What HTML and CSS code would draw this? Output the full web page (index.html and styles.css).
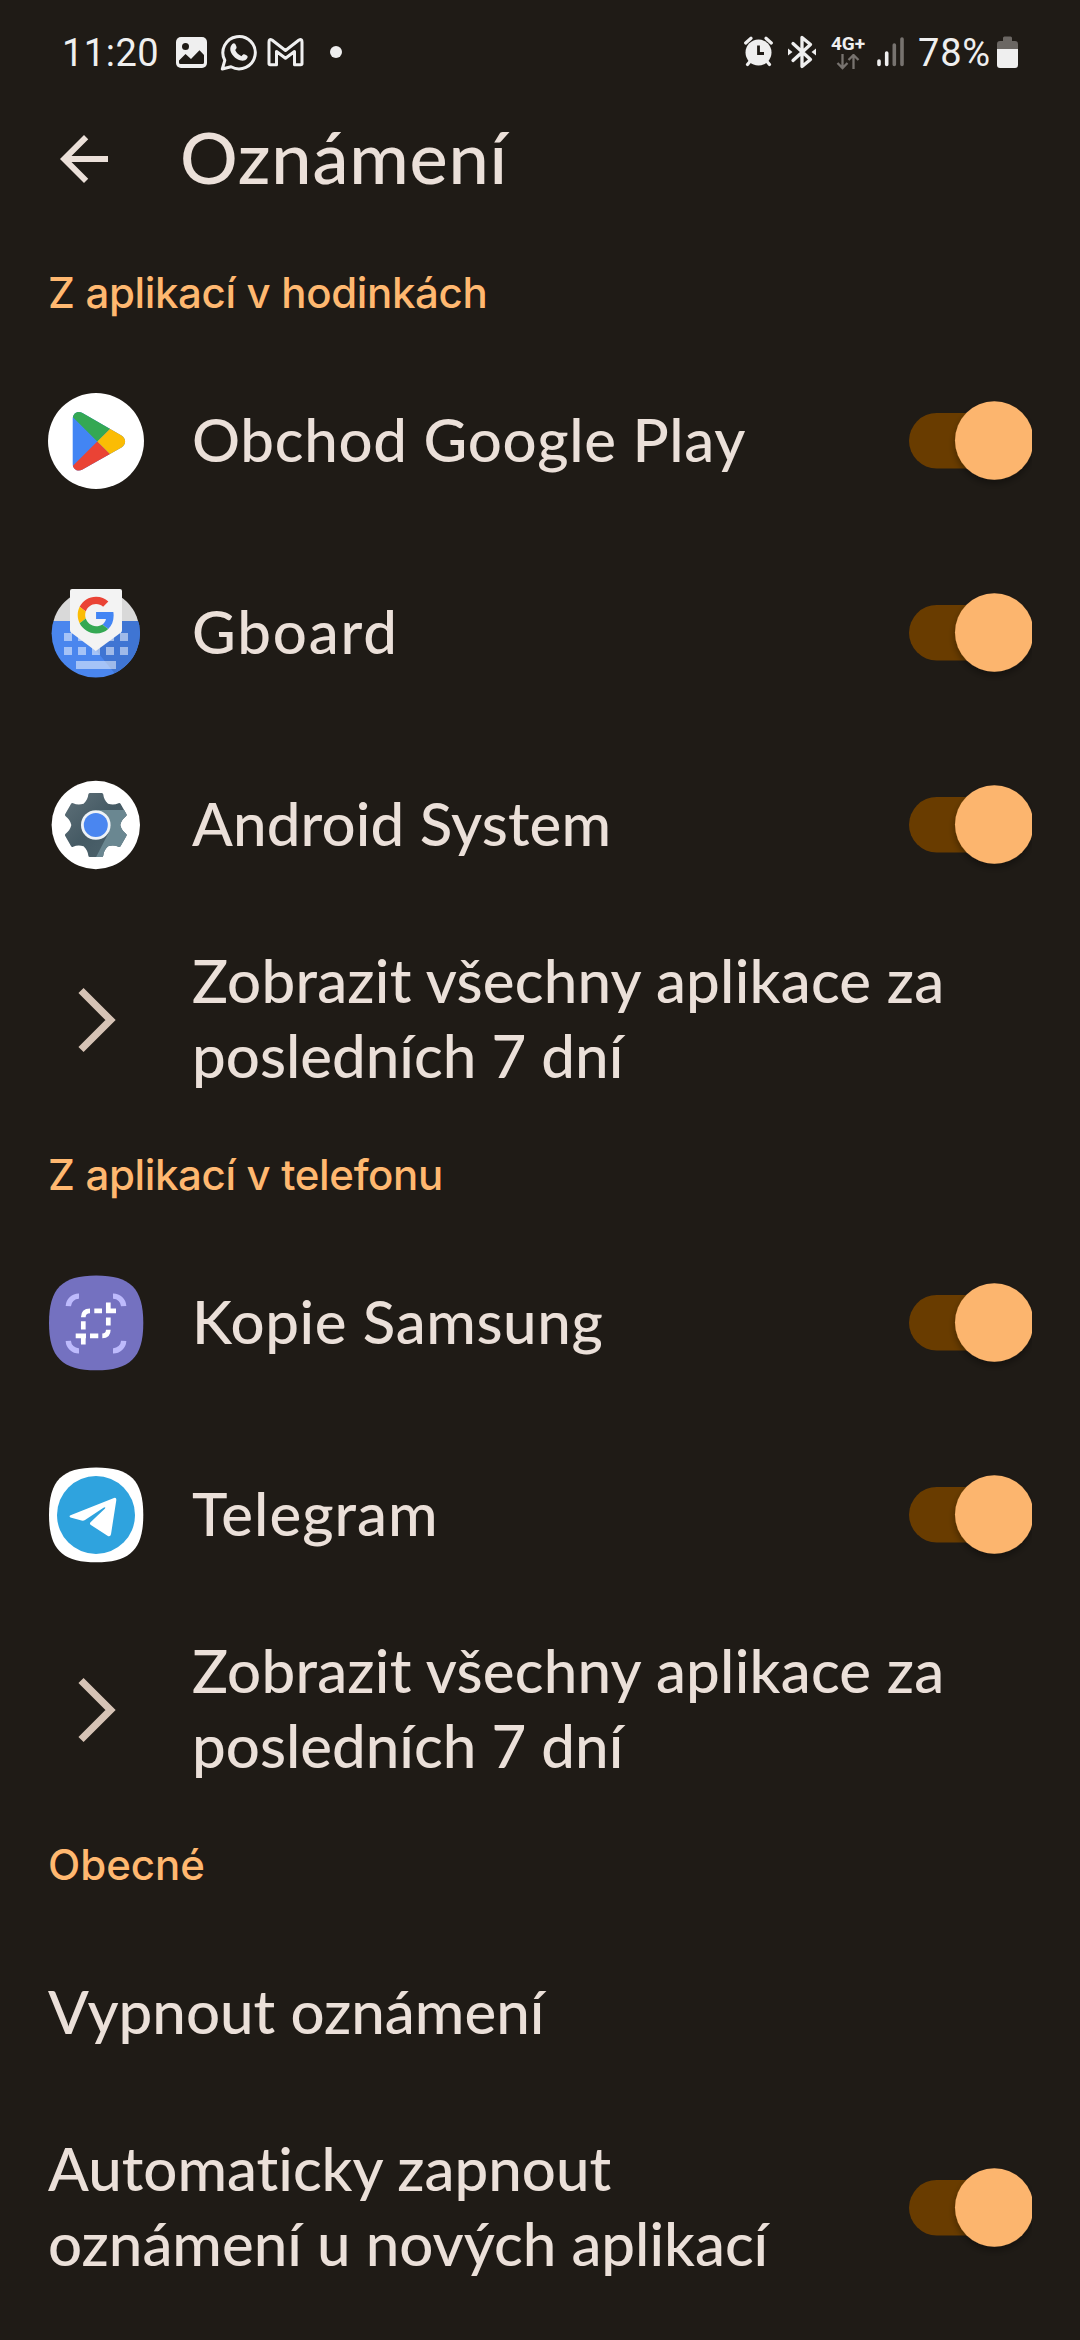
FILE: index.html
```html
<!DOCTYPE html>
<html lang="cs">
<head>
<meta charset="utf-8">
<title>Oznámení</title>
<link rel="stylesheet" href="styles.css">
</head>
<body>
<svg class="defs" width="0" height="0" aria-hidden="true">
  <defs>
    <filter id="thumb-shadow" x="-20%" y="-20%" width="150%" height="150%">
      <feDropShadow dx="0" dy="4" stdDeviation="3.5" flood-color="#000" flood-opacity=".35"/>
    </filter>
    <symbol id="toggle" viewBox="0 0 123 110">
      <rect x="0" y="27" width="115" height="55.500" rx="27.750" fill="#693c00"/>
      <circle cx="85.300" cy="54.500" r="39.300" fill="#fcb56e" filter="url(#thumb-shadow)"/>
    </symbol>
    <symbol id="chevron" viewBox="0 0 96 96">
      <path d="M33 18.500 62.500 48 33 77.500" fill="none" stroke="#d6c3b5" stroke-width="7.300"/>
    </symbol>
  </defs>
</svg>

<div class="status-bar">
  <div class="status-left">
    <span class="clock">11:20</span>
    <svg class="picture" width="31" height="40" viewBox="0 0 31 40">
      <rect y="5" width="31" height="31" rx="5" fill="#efefef"/>
      <circle cx="9.500" cy="14.500" r="3.500" fill="#1f1b16"/>
      <path d="M3 28.500 9.500 22 15 27 23.500 18.300 28 23V30.500Q28 32 26.500 32H4.500Q3 32 3 30.500Z" fill="#1f1b16"/>
    </svg>
    <svg class="whatsapp" width="37" height="40" viewBox="0 0 37 40">
      <path d="M2.300 37 4.800 28.300A16.200 16.200 0 1 1 11 34.700Z" fill="none" stroke="#efefef" stroke-width="3" stroke-linejoin="round"/>
      <path d="M12.300 12C14 10.500 15.200 11.500 16 13.500 16.800 15.500 17 16 15.200 18 16.300 20.800 18.800 23 21.500 24.200 23.300 22 24 22 26 23 28 24 28 24.800 27 26.500 25 29.500 21 29.300 17 27 12 24 7.500 17 12.300 12Z" fill="#efefef"/>
    </svg>
    <svg class="gmail" width="37" height="40" viewBox="0 0 37 40">
      <path d="M2 31.500V10Q2 6.500 5 8L18.500 18.500 32 8Q35 6.500 35 10V31.500Q35 32.700 33.800 32.700H27.500V19.500L18.500 26.300 9.500 19.500V32.700H3.200Q2 32.700 2 31.500Z" fill="none" stroke="#efefef" stroke-width="3" stroke-linejoin="round"/>
    </svg>
    <span class="more-dot"></span>
  </div>
  <div class="status-right">
    <svg width="29" height="40" viewBox="0 0 29 40">
      <g fill="none" stroke="#efefef" stroke-width="3.200" stroke-linecap="round">
        <path d="M1.700 11 7 6.300M27.300 11 22 6.300M6 29.500 3.500 32.500M23 29.500 25.500 32.500"/>
      </g>
      <circle cx="14.500" cy="20.500" r="13" fill="#efefef"/>
      <path d="M14.500 13.500V21.500H20" fill="none" stroke="#1f1b16" stroke-width="2.800"/>
    </svg>
    <svg class="bluetooth" width="28" height="40" viewBox="0 0 28 40">
      <path d="M5 11.500 22.500 27.500 14 34.500V5.500L22.500 12.500 5 28.500" fill="none" stroke="#efefef" stroke-width="3.300" stroke-linejoin="round" stroke-linecap="round"/>
      <path d="M0 16.500 4.500 20 0 23.500ZM28 16.500 23.500 20 28 23.500Z" fill="#efefef"/>
    </svg>
    <div class="network">
      <span class="network-type">4G+</span>
      <svg width="24" height="16" viewBox="0 0 24 16">
        <path d="M6.500 0V14M1.500 9 6.500 14 11.500 9M17.500 15V1M12.500 6 17.500 1 22.500 6" fill="none" stroke="#77736f" stroke-width="2.300"/>
      </svg>
    </div>
    <svg class="signal" width="28" height="40" viewBox="0 0 28 40">
      <path d="M2 29V32.500M9.700 21V32.500" stroke="#efefef" stroke-width="3.600" stroke-linecap="round"/>
      <path d="M17.300 13V32.500M25 7V32.500" stroke="#77736f" stroke-width="3.600" stroke-linecap="round"/>
    </svg>
    <span class="battery-text">78%</span>
    <svg width="21" height="40" viewBox="0 0 21 40">
      <path d="M6 9V6Q6 4.500 7.500 4.500H13.500Q15 4.500 15 6V9H18Q21 9 21 12V17H0V12Q0 9 3 9Z" fill="#6b6763"/>
      <path d="M0 17H21V33Q21 36 18 36H3Q0 36 0 33Z" fill="#efefef"/>
    </svg>
  </div>
</div>

<header class="header">
  <svg width="72" height="72" viewBox="0 0 24 24">
    <path d="M20 11H7.830l5.590-5.590L12 4l-8 8 8 8 1.410-1.410L7.830 13H20v-2z" fill="#ebe0d9"/>
  </svg>
  <h1 class="title">Oznámení</h1>
</header>

<main>
  <h2 class="section-title">Z aplikací v hodinkách</h2>

  <div class="row">
    <svg class="icon" viewBox="0 0 96 96">
      <clipPath id="play-shape"><path d="M24.700 26C24.700 20 30 17.300 34.500 20L73.500 42.500C78.300 45.500 78.300 51.500 73.500 54.500L34.500 76.600C30 79.200 24.700 76.500 24.700 71Z"/></clipPath>
      <circle cx="48" cy="48" r="48" fill="#fff"/>
      <g clip-path="url(#play-shape)">
        <path d="M20 15H80V80H20Z" fill="#4285f4"/>
        <path d="M49.300 48.500 24.700 24 20 10 80 18 61.500 36.300Z" fill="#34a853"/>
        <path d="M49.300 48.500 24.700 73 20 86 80 79 61.500 60.500Z" fill="#ea4335"/>
        <path d="M49.300 48.500 75 23H90V74H75Z" fill="#fbbc04"/>
      </g>
    </svg>
    <span class="label label-play">Obchod Google Play</span>
    <svg class="toggle"><use href="#toggle"/></svg>
  </div>

  <div class="row">
    <svg class="icon" viewBox="0 0 96 96">
      <clipPath id="gboard-disc"><circle cx="47.800" cy="48.300" r="44.200"/></clipPath>
      <g clip-path="url(#gboard-disc)">
        <path d="M0 0H96V36H0Z" fill="#d9d9d9"/>
        <path d="M0 36H96V96H0Z" fill="#4a86ee"/>
        <path d="M74 36H96V62L68 90 47.800 65 74 46Z" fill="#3f75d3"/>
      </g>
      <g fill="#fff" fill-opacity=".5">
        <path d="M16 48h8v8h-8zM30 48h8v8h-8zM58 48h8v8h-8zM72 48h8v8h-8zM16 62h8v8h-8zM30 62h8v8h-8zM44 62h8v8h-8zM58 62h8v8h-8zM72 62h8v8h-8zM28 76h40v8h-40z"/>
      </g>
      <path d="M24 4H72Q74 4 74 6V45Q74 46.500 73 47.500L47.800 66 23 47.500Q22 46.500 22 45V6Q22 4 24 4Z" fill="#f3f3f3"/>
      <g transform="translate(29.700 11.700) scale(.765)">
        <path fill="#ea4335" d="M24 9.500c3.540 0 6.710 1.220 9.210 3.600l6.850-6.850C35.900 2.380 30.470 0 24 0 14.620 0 6.510 5.380 2.560 13.220l7.980 6.190C12.430 13.720 17.740 9.500 24 9.500z"/>
        <path fill="#4285f4" d="M46.980 24.550c0-1.570-.15-3.090-.38-4.550H24v9.020h12.940c-.58 2.960-2.260 5.480-4.780 7.180l7.730 6c4.510-4.180 7.090-10.360 7.090-17.650z"/>
        <path fill="#fbbc05" d="M10.530 28.590c-.48-1.450-.76-2.990-.76-4.590s.27-3.140.76-4.590l-7.980-6.190C.92 16.460 0 20.120 0 24c0 3.880.92 7.540 2.560 10.780l7.970-6.190z"/>
        <path fill="#34a853" d="M24 48c6.480 0 11.930-2.130 15.890-5.810l-7.730-6c-2.150 1.450-4.920 2.300-8.160 2.300-6.260 0-11.570-4.220-13.470-9.910l-7.980 6.190C6.510 42.620 14.620 48 24 48z"/>
      </g>
    </svg>
    <span class="label label-gboard">Gboard</span>
    <svg class="toggle"><use href="#toggle"/></svg>
  </div>

  <div class="row">
    <svg class="icon" viewBox="0 0 96 96">
      <defs>
        <path id="tooth" d="M-6 -32H6Q7.300 -32 7.500 -30.500C8 -26.500 9.500 -23.500 14 -19.500L0 0-14 -19.500C-9.500 -23.500 -8 -26.500 -7.500 -30.500Q-7.300 -32 -6 -32Z"/>
        <clipPath id="gear-shape">
          <circle cx="47.800" cy="48" r="23.500"/>
          <use href="#tooth" transform="translate(47.800 48)"/>
          <use href="#tooth" transform="translate(47.800 48) rotate(60)"/>
          <use href="#tooth" transform="translate(47.800 48) rotate(120)"/>
          <use href="#tooth" transform="translate(47.800 48) rotate(180)"/>
          <use href="#tooth" transform="translate(47.800 48) rotate(240)"/>
          <use href="#tooth" transform="translate(47.800 48) rotate(300)"/>
        </clipPath>
        <linearGradient id="gear-shade" x1="0" y1="0" x2="1" y2="1">
          <stop offset="0" stop-color="#64757d"/><stop offset=".5" stop-color="#455a64"/><stop offset="1" stop-color="#50666f"/>
        </linearGradient>
      </defs>
      <circle cx="47.800" cy="48" r="44.200" fill="#fff"/>
      <g clip-path="url(#gear-shape)">
        <path d="M10 10H86V86H10Z" fill="url(#gear-shade)"/>
        <path d="M50 33H86V86H45L61 55Z" fill="#6a8791"/>
      </g>
      <circle cx="47.800" cy="48" r="14.800" fill="#eef2f6"/>
      <circle cx="47.800" cy="48" r="12" fill="#4a86f0"/>
    </svg>
    <span class="label label-android">Android System</span>
    <svg class="toggle"><use href="#toggle"/></svg>
  </div>

  <div class="row row-all">
    <svg class="icon"><use href="#chevron"/></svg>
    <span class="label"><span class="line label-all">Zobrazit všechny aplikace za</span><span class="line">posledních 7 dní</span></span>
  </div>

  <h2 class="section-title section-phone">Z aplikací v telefonu</h2>

  <div class="row">
    <svg class="icon" viewBox="0 0 96 96">
      <path d="M1 48C1 13.500 14 .5 48.200 .5S95.300 13.500 95.300 48 82 95.300 48.200 95.300 1 82.500 1 48Z" fill="#7471c0"/>
      <path d="M20.300 31.200A10.500 10.500 0 0 1 31 21.200M65 21.200A10.500 10.500 0 0 1 75.700 31.200M20.300 65.800A10.500 10.500 0 0 0 31 75.800M65 75.800A10.500 10.500 0 0 0 75.700 65.800" fill="none" stroke="#bdbafc" stroke-width="5.300"/>
      <path transform="translate(0 -.5)" d="M35.300 42.800Q35.300 36.300 42 36.300M46.300 36.300H54M60.300 28V36.300H68M58 36.300H62M60.300 34V38.700M60.300 43V51M60.300 55.200Q60.300 61.300 54.300 61.300M42 61.300H50.300M27.700 61.300H38M35.300 59V70M35.300 46.700V55" fill="none" stroke="#fff" stroke-width="4.700"/>
    </svg>
    <span class="label label-samsung">Kopie Samsung</span>
    <svg class="toggle"><use href="#toggle"/></svg>
  </div>

  <div class="row">
    <svg class="icon" viewBox="0 0 96 96">
      <path d="M1 48C1 13.500 14 .5 48.200 .5S95.300 13.500 95.300 48 82 95.300 48.200 95.300 1 82.500 1 48Z" fill="#fff"/>
      <circle cx="48" cy="48" r="39" fill="#2fa3de"/>
      <path transform="translate(0 -.8)" d="M22.500 49 66 31.800Q68.600 31 68.300 34L63 68Q62.300 71 59.500 69.500L42.500 58.500Q41.300 57.500 42.500 56L57 42.300Q58 40.300 55.500 41.500L37 53.800Q35.500 54.800 33.500 54.300L22.500 51.200Q20.500 50 22.500 49Z" fill="#fff"/>
    </svg>
    <span class="label label-telegram">Telegram</span>
    <svg class="toggle"><use href="#toggle"/></svg>
  </div>

  <div class="row row-all">
    <svg class="icon"><use href="#chevron"/></svg>
    <span class="label"><span class="line label-all">Zobrazit všechny aplikace za</span><span class="line">posledních 7 dní</span></span>
  </div>

  <h2 class="section-title section-general">Obecné</h2>

  <div class="row">
    <span class="label">Vypnout oznámení</span>
  </div>

  <div class="row row-all">
    <span class="label"><span class="line">Automaticky zapnout</span><span class="line">oznámení u nových aplikací</span></span>
    <svg class="toggle"><use href="#toggle"/></svg>
  </div>
</main>
</body>
</html>
```
FILE: styles.css
```css
* { box-sizing: border-box; }

body {
  margin: 0;
  width: 1080px;
  height: 2340px;
  overflow: hidden;
  background: #1f1b16;
  color: #ebe0d9;
  font-family: Lato, "Open Sans", sans-serif;
  font-variant-ligatures: none;
}

svg { display: block; flex: none; }
.defs { height: 0; }

/* Status bar */
.status-bar {
  display: flex;
  justify-content: space-between;
  height: 104px;
  padding: 0 62px 0 61px;
  color: #efefef;
  font-family: Roboto, sans-serif;
  font-size: 38px;
}
.status-left, .status-right { display: flex; align-items: center; }
.clock { width: 115px; padding: 1px 0 0 1px; letter-spacing: .5px; }
.whatsapp { margin-left: 13px; }
.gmail { margin-left: 10px; }
.more-dot { width: 12px; height: 12px; margin-left: 26px; border-radius: 50%; background: #efefef; }
.bluetooth { margin-left: 15px; }
.network {
  display: flex;
  flex-direction: column;
  align-items: center;
  width: 32px;
  height: 36px;
  margin-left: 16px;
}
.network-type { font-size: 19px; font-weight: 700; line-height: 20px; }
.signal { margin-left: 13px; }
.battery-text { width: 92px; padding: 1px 0 0 13px; letter-spacing: .8px; white-space: nowrap; }

/* Header */
.header {
  display: flex;
  align-items: center;
  gap: 60px;
  height: 110px;
  margin-bottom: 24px;
  padding-left: 48px;
}
.title {
  margin: 0;
  padding-bottom: 7px;
  font-size: 72px;
  font-weight: 500;
  line-height: 86px;
  letter-spacing: .8px;
}

/* Sections */
.section-title {
  display: flex;
  align-items: flex-end;
  height: 107px;
  margin: 0;
  padding: 0 48px 27px;
  color: #ffb870;
  font-family: Inter, sans-serif;
  font-size: 42px;
  font-weight: 500;
  line-height: 50px;
  letter-spacing: -.35px;
}
.section-phone { height: 108px; }
.section-general { height: 108px; letter-spacing: 0; }

/* Rows */
.row { display: flex; align-items: center; height: 192px; padding: 0 48px; }
.row-all { height: 198px; }
.icon { width: 96px; height: 96px; margin-right: 48px; }
.label {
  flex: 1;
  padding-bottom: 4px;
  font-size: 60px;
  font-weight: 500;
  line-height: 75px;
  white-space: nowrap;
}
.line { display: block; }
.toggle { width: 123px; height: 110px; }

.label-play { letter-spacing: .7px; }
.label-gboard { letter-spacing: 1.8px; }
.label-android { letter-spacing: .15px; }
.label-all { letter-spacing: .25px; }
.label-samsung { letter-spacing: .6px; }
.label-telegram { letter-spacing: 1px; }
```
